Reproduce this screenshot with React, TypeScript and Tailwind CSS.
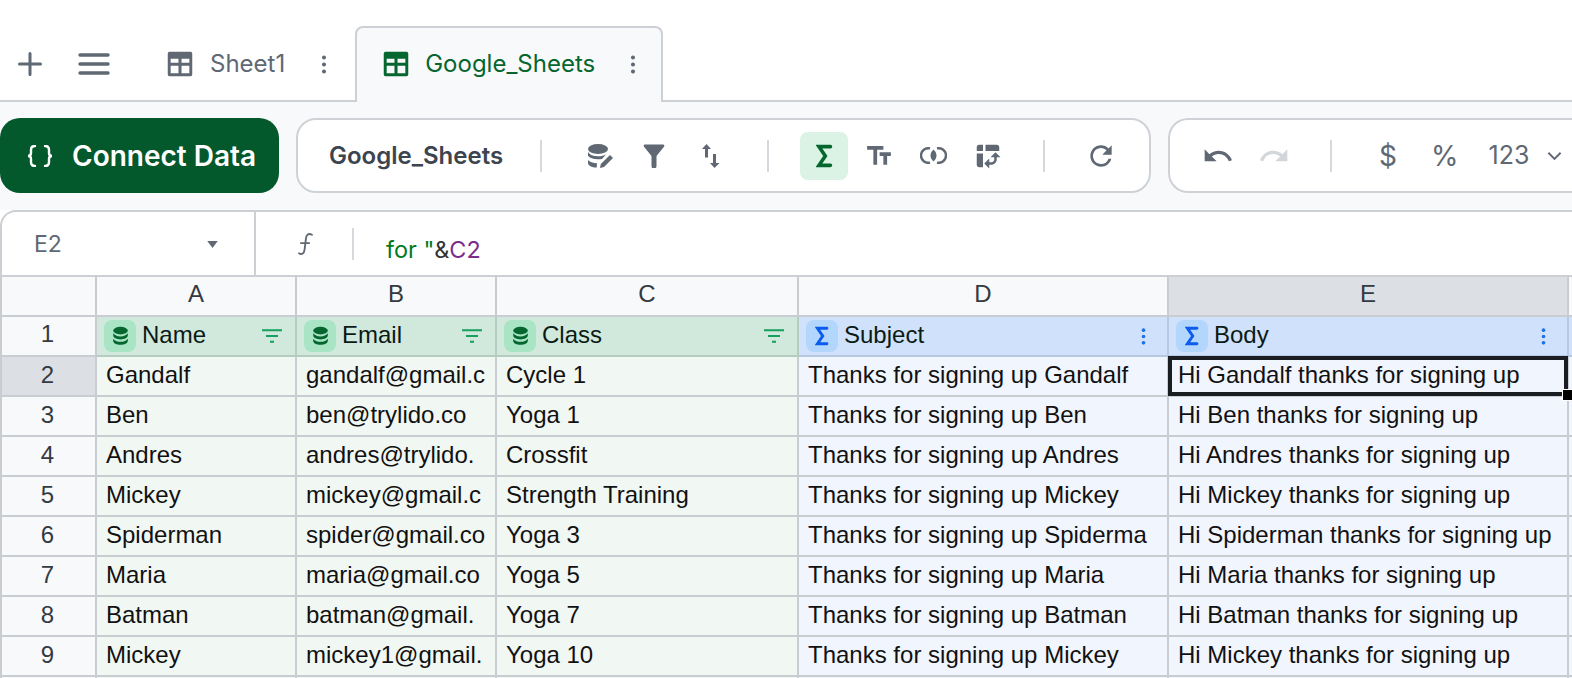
import { MdPivotTableChart, MdRedo, MdRefresh, MdTextFields, MdUndo } from 'react-icons/md'

const rows = [
  ['Gandalf', 'gandalf@gmail.c', 'Cycle 1', 'Thanks for signing up Gandalf', 'Hi Gandalf thanks for signing up'],
  ['Ben', 'ben@trylido.co', 'Yoga 1', 'Thanks for signing up Ben', 'Hi Ben thanks for signing up'],
  ['Andres', 'andres@trylido.', 'Crossfit', 'Thanks for signing up Andres', 'Hi Andres thanks for signing up'],
  ['Mickey', 'mickey@gmail.c', 'Strength Training', 'Thanks for signing up Mickey', 'Hi Mickey thanks for signing up'],
  ['Spiderman', 'spider@gmail.co', 'Yoga 3', 'Thanks for signing up Spiderma', 'Hi Spiderman thanks for signing up'],
  ['Maria', 'maria@gmail.co', 'Yoga 5', 'Thanks for signing up Maria', 'Hi Maria thanks for signing up'],
  ['Batman', 'batman@gmail.', 'Yoga 7', 'Thanks for signing up Batman', 'Hi Batman thanks for signing up'],
  ['Mickey', 'mickey1@gmail.', 'Yoga 10', 'Thanks for signing up Mickey', 'Hi Mickey thanks for signing up'],
]

const gridCols = 'grid grid-cols-[97px_200px_200px_302px_370px_400px_1fr]'

function TableIcon({ className }: { className: string }) {
  return (
    <svg viewBox="0 0 24 24" className={className}>
      <path
        fill="currentColor"
        fillRule="evenodd"
        d="M3 1.5h18A1.5 1.5 0 0 1 22.5 3v18a1.5 1.5 0 0 1-1.5 1.5H3A1.5 1.5 0 0 1 1.5 21V3A1.5 1.5 0 0 1 3 1.5zM4 7.5V11h6.7V7.5zM13.3 7.5V11H20V7.5zM4 13.5V20h6.7v-6.5zM13.3 13.5V20H20v-6.5z"
      />
    </svg>
  )
}

function Kebab({ className }: { className: string }) {
  return (
    <svg viewBox="0 0 6 24" className={className}>
      <circle cx="3" cy="4" r="2.3" fill="currentColor" />
      <circle cx="3" cy="12" r="2.3" fill="currentColor" />
      <circle cx="3" cy="20" r="2.3" fill="currentColor" />
    </svg>
  )
}

function Sigma({ className }: { className: string }) {
  return (
    <svg viewBox="0 0 20 28" className={className} fill="none">
      <path d="M17 3H3.5L11 14 3.5 25H17" stroke="currentColor" strokeWidth="4.2" strokeLinecap="round" strokeLinejoin="miter" />
    </svg>
  )
}

function Db({ className }: { className: string }) {
  return (
    <svg viewBox="0 0 24 26" className={className} fill="none">
      <ellipse cx="12" cy="6" rx="9.5" ry="5" fill="currentColor" />
      <path d="M2.5 9.5v3c0 3 4.5 5 9.5 5s9.5-2 9.5-5v-3c-1.6 2.7-5.3 4-9.5 4s-7.9-1.3-9.5-4z" fill="currentColor" />
      <path d="M2.5 16.5v3c0 3 4.5 5 9.5 5s9.5-2 9.5-5v-3c-1.6 2.7-5.3 4-9.5 4s-7.9-1.3-9.5-4z" fill="currentColor" />
    </svg>
  )
}

function FilterLines() {
  return (
    <svg viewBox="0 0 20 14" className="h-[14px] w-[20px] text-[#16a05d]" fill="none">
      <path d="M0 1.2h20M4 7h12M8 12.8h4" stroke="currentColor" strokeWidth="2" />
    </svg>
  )
}

function Divider({ className = '' }: { className?: string }) {
  return <div className={`h-[32px] w-[2px] shrink-0 bg-[#d5d8dc] ${className}`} />
}

function ColHead({ label, icon, action, tone }: { label: string; icon: 'db' | 'sigma'; action: 'filter' | 'menu'; tone: 'green' | 'blue' }) {
  return (
    <div className={`flex items-center pl-[7px] border-r-2 border-b-2 ${tone === 'green' ? 'bg-[#d1e9dc] border-[#b5cdc1] pr-[13px]' : 'bg-[#d0e1fb] border-[#b8c8e0] pr-[21px]'}`}>
      <div className={`flex h-[32px] w-[32px] shrink-0 items-center justify-center rounded-[8px] ${tone === 'green' ? 'bg-[#a9e5c5]' : 'bg-[#b3d6fd]'}`}>
        {icon === 'db' ? <Db className="h-[20px] w-[19px] text-[#05672f]" /> : <Sigma className="h-[20px] w-[14px] text-[#0b5cec]" />}
      </div>
      <span className="ml-[6px] flex-1 pb-[3px] text-[24px] leading-none text-[#0b1a14]">{label}</span>
      {action === 'filter' ? <FilterLines /> : <Kebab className="h-[19px] w-[5px] text-[#1a73e8]" />}
    </div>
  )
}

export default function App() {
  return (
    <div className="flex h-[678px] w-[1572px] flex-col overflow-hidden bg-white font-['Inter',sans-serif]">
      {/* sheet tabs */}
      <div className="flex h-[102px] shrink-0 items-end border-b-2 border-[#cdd1d6] pl-[18px]">
        <div className="flex h-[74px] items-center pt-[2px] text-[#5f6873]">
          <svg viewBox="0 0 24 24" className="h-[24px] w-[24px]" fill="none">
            <path d="M12 1.5v21M1.5 12h21" stroke="currentColor" strokeWidth="3" strokeLinecap="round" />
          </svg>
          <svg viewBox="0 0 32 24" className="ml-[36px] h-[24px] w-[32px]" fill="none">
            <path d="M2 3h28M2 12h28M2 21h28" stroke="currentColor" strokeWidth="3.4" strokeLinecap="round" />
          </svg>
          <TableIcon className="ml-[56px] h-[28px] w-[28px]" />
          <span className="ml-[16px] text-[24px]">Sheet1</span>
          <Kebab className="ml-[36px] h-[21px] w-[6px]" />
        </div>
        <div className="relative top-[2px] ml-[28px] flex h-[76px] w-[308px] items-center rounded-t-[8px] border-2 border-b-0 border-[#cdd1d6] bg-[#f8f9fb] pb-[2px] pl-[25px] text-[#05662f]">
          <TableIcon className="h-[28px] w-[28px]" />
          <span className="ml-[15px] text-[24px]">Google_Sheets</span>
          <Kebab className="ml-[35px] h-[21px] w-[6px] text-[#5f6873]" />
        </div>
      </div>

      {/* toolbar */}
      <div className="flex shrink-0 items-start gap-[17px] bg-[#f8f9fb] pt-[16px] pb-[17px] pr-0">
        <button className="flex h-[75px] w-[279px] shrink-0 items-center rounded-[20px] bg-[#03582c] pl-[27px] text-white">
          <svg viewBox="0 0 26 22" className="h-[22px] w-[26px]" fill="none">
            <path
              d="M8 1C5 1 4 2 4 5v3c0 2-1 3-3 3 2 0 3 1 3 3v3c0 3 1 4 4 4M18 1c3 0 4 1 4 4v3c0 2 1 3 3 3-2 0-3 1-3 3v3c0 3-1 4-4 4"
              stroke="currentColor"
              strokeWidth="2.400"
              strokeLinecap="round"
            />
          </svg>
          <span className="ml-[19px] mt-[1px] text-[28px] font-semibold">Connect Data</span>
        </button>

        <div className="flex h-[75px] w-[855px] shrink-0 items-center rounded-[20px] border-2 border-[#ced2d7] bg-white pl-[31px] text-[#5f6873]">
          <span className="w-[174px] text-[24px] font-semibold text-[#3c4450]">Google_Sheets</span>
          <Divider className="ml-[37px]" />
          <svg viewBox="0 0 26 24" className="ml-[45px] h-[24px] w-[26px]" fill="currentColor">
            <ellipse cx="11" cy="5" rx="10" ry="5" />
            <path d="M1 8c1.500 2.800 5 4.200 10 4.200 3.500 0 6-.6 8-1.800l-4 4.500c-1.200.2-2.600.3-4 .3-5 0-8.500-1.400-10-3.500z" />
            <path d="M1 16c1.500 2 5 3.200 9 3.300l-.3 4.200C4.500 23.500 1 21.500 1 19z" />
            <path d="M13 24l.8-4L23 11l3 3-9 9z" />
          </svg>
          <svg viewBox="0 0 22 24" className="ml-[30px] h-[24px] w-[22px]" fill="currentColor">
            <path d="M2 .5h18c1.200 0 1.800 1.300 1 2.300L13.500 12v10a2 2 0 0 1-5 0V12L1 2.800C.2 1.800.8.500 2 .5z" />
          </svg>
          <svg viewBox="0 0 18 24" className="ml-[37px] h-[24px] w-[18px]" fill="currentColor">
            <path d="M4.500 0 9 5H6v8.500H3V5H0zM11 10h3v9h3.500L12.500 24 8 19h3z" />
          </svg>
          <Divider className="ml-[47px]" />
          <div className="ml-[31px] flex h-[48px] w-[48px] items-center justify-center rounded-[8px] bg-[#dbf3e4]">
            <Sigma className="h-[24px] w-[17px] text-[#05662f]" />
          </div>
          <MdTextFields className="ml-[16px] h-[30px] w-[30px]" />
          <svg viewBox="0 0 27 17" className="ml-[26px] h-[17px] w-[27px]" fill="none">
            <path d="M10 1.400A7.300 7.300 0 1 0 10 15.600M17 1.400A7.300 7.300 0 1 1 17 15.600" stroke="currentColor" strokeWidth="2.400" />
            <path d="M13.500 2.500c4 3.500 4 8.500 0 12-4-3.500-4-8.500 0-12z" fill="currentColor" />
          </svg>
          <MdPivotTableChart className="ml-[26px] h-[30px] w-[30px]" />
          <Divider className="ml-[40px]" />
          <MdRefresh className="ml-[40px] h-[32px] w-[32px]" />
        </div>

        <div className="flex h-[75px] w-[420px] shrink-0 items-center rounded-l-[20px] border-2 border-r-0 border-[#ced2d7] bg-white pl-[32px] text-[#5f6873]">
          <MdUndo className="h-[32px] w-[32px]" />
          <MdRedo className="ml-[24px] h-[32px] w-[32px] text-[#d3d6da]" />
          <Divider className="ml-[40px]" />
          <span className="ml-[47px] text-[28px]">$</span>
          <span className="ml-[34px] text-[28px]">%</span>
          <span className="ml-[30px] text-[25px]">123</span>
          <svg viewBox="0 0 16 10" className="ml-[18px] h-[10px] w-[15px]" fill="none">
            <path d="M1.500 1.500 8 8l6.500-6.500" stroke="currentColor" strokeWidth="2" />
          </svg>
        </div>
      </div>

      {/* formula bar */}
      <div className="flex h-[67px] shrink-0 rounded-tl-[16px] border-2 border-r-0 border-[#ccd0d5] bg-white">
        <div className="flex w-[254px] shrink-0 items-center border-r-2 border-[#ccd0d5] pl-[32px] pr-[36px] pt-[2px]">
          <span className="flex-1 text-[23px] text-[#5f6873]">E2</span>
          <svg viewBox="0 0 12 8" className="h-[7px] w-[11px] text-[#5f6873]">
            <path d="M0 0h12L6 8z" fill="currentColor" />
          </svg>
        </div>
        <div className="flex items-center pl-[41px]">
          <svg viewBox="0 0 18 26" className="h-[24px] w-[17px] text-[#5f6873]" fill="none">
            <path d="M16 3c-4-2-6 0-6.500 4L8 19c-.5 4-3 6-6 4M4 12h9" stroke="currentColor" strokeWidth="2" strokeLinecap="round" />
          </svg>
          <Divider className="ml-[38px]" />
        </div>
        <div className="ml-[32px] flex items-center pt-[12px] text-[23.400px]">
          <span className="text-[#007a1e]">for "</span>
          <span className="text-[#333]">&amp;</span>
          <span className="text-[#7b2d8b]">C2</span>
        </div>
      </div>

      {/* grid */}
      <div className="font-['Liberation_Sans',sans-serif]">
        <div className={`${gridCols} h-[40px] text-[24px] leading-none text-[#333a42]`}>
          <div className="border-x-2 border-b-2 border-[#c9cdd1] bg-[#f8f9fb]" />
          {['A', 'B', 'C', 'D'].map((c) => (
            <div key={c} className="flex items-center justify-center border-r-2 border-b-2 border-[#c9cdd1] bg-[#f8f9fb] pb-[4px]">{c}</div>
          ))}
          <div className="flex items-center justify-center border-r-2 border-b-2 border-[#c9cdd1] bg-[#dcdfe3] pb-[4px]">E</div>
          <div className="border-b-2 border-[#c9cdd1] bg-[#f8f9fb]" />
        </div>
        <div className={`${gridCols} h-[40px]`}>
          <div className="flex items-center justify-center border-x-2 border-b-2 border-[#c9cdd1] bg-[#f8f9fb] pb-[4px] pr-[2px] text-[24px] leading-none text-[#333a42]">1</div>
          <ColHead label="Name" icon="db" action="filter" tone="green" />
          <ColHead label="Email" icon="db" action="filter" tone="green" />
          <ColHead label="Class" icon="db" action="filter" tone="green" />
          <ColHead label="Subject" icon="sigma" action="menu" tone="blue" />
          <ColHead label="Body" icon="sigma" action="menu" tone="blue" />
          <div className="border-b-2 border-[#b8c8e0] bg-[#d0e1fb]" />
        </div>
        {rows.map((row, r) => (
          <div key={r} className={`${gridCols} h-[40px] text-[24px] text-[#111]`}>
            <div className={`flex items-center justify-center border-x-2 border-b-2 border-[#c9cdd1] pb-[2px] pr-[2px] text-[#333a42] ${r === 0 ? 'bg-[#dcdfe3]' : 'bg-[#f8f9fb]'}`}>{r + 2}</div>
            {row.map((v, c) => (
              <div
                key={c}
                className={`relative flex items-center whitespace-nowrap border-r-2 border-b-2 border-[#c9cdd1] pb-[2px] pl-[9px] ${c < 3 ? 'bg-[#f1f7f3]' : 'bg-[#f1f5fe]'}`}
              >
                <span>{v}</span>
                {r === 0 && c === 4 && (
                  <div className="absolute -left-[1px] -top-[1px] -bottom-[1px] -right-[1px] z-10 border-4 border-[#1a1d21]">
                    <div className="absolute -bottom-[9px] -right-[10px] h-[12px] w-[12px] border border-white bg-black" />
                  </div>
                )}
              </div>
            ))}
            <div className="border-b-2 border-[#c9cdd1] bg-[#f1f5fe]" />
          </div>
        ))}
        <div className={`${gridCols} h-[40px]`}>
          <div className="border-x-2 border-[#c9cdd1] bg-[#f8f9fb]" />
          <div className="border-r-2 border-[#c9cdd1] bg-[#f1f7f3]" />
          <div className="border-r-2 border-[#c9cdd1] bg-[#f1f7f3]" />
          <div className="border-r-2 border-[#c9cdd1] bg-[#f1f7f3]" />
          <div className="border-r-2 border-[#c9cdd1] bg-[#f1f5fe]" />
          <div className="border-r-2 border-[#c9cdd1] bg-[#f1f5fe]" />
          <div className="bg-[#f1f5fe]" />
        </div>
      </div>
    </div>
  )
}
